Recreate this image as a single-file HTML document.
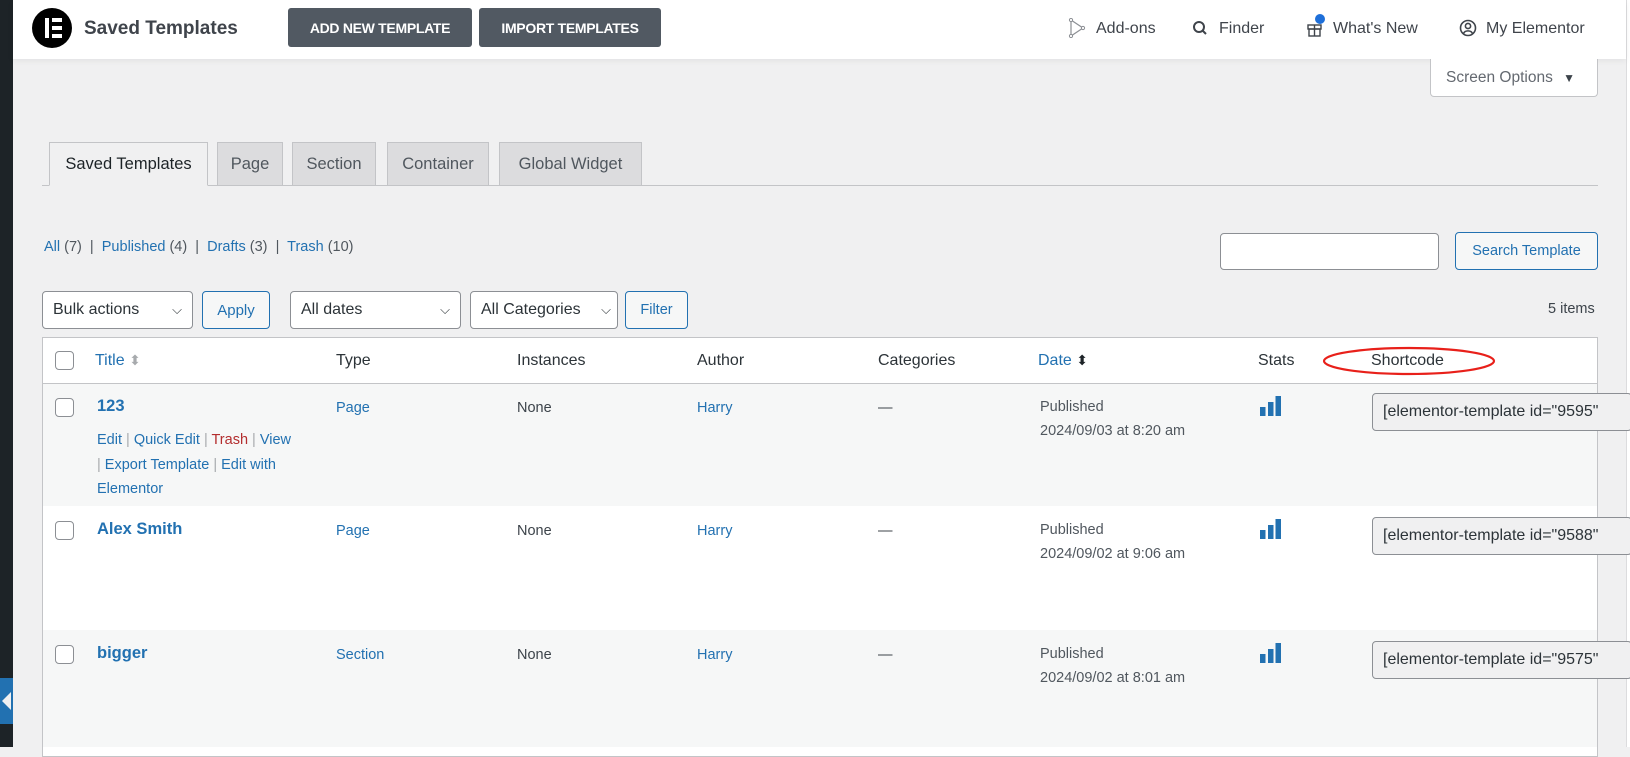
<!DOCTYPE html>
<html><head><meta charset="utf-8"><style>
*{box-sizing:border-box;margin:0;padding:0}
body{width:1630px;height:747px;overflow:hidden;background:#f0f0f1;font-family:"Liberation Sans",sans-serif;font-size:14.5px;color:#3c434a;position:relative}
.a{position:absolute;white-space:nowrap}
a{color:#2271b1;text-decoration:none}
.hdr{position:absolute;left:13px;top:0;width:1613px;height:59px;background:#fff;box-shadow:0 2px 6px rgba(0,0,0,.06)}
.btn{position:absolute;top:8px;height:39px;background:#515962;color:#fff;border-radius:3px;font-weight:bold;font-size:14px;display:flex;align-items:center;justify-content:center;letter-spacing:-.3px}
.nav{position:absolute;top:19px;font-size:16px;color:#3f444b}
.tab{position:absolute;top:142px;height:44px;border:1px solid #c3c4c7;background:#dcdcde;display:flex;align-items:center;justify-content:center;font-size:16.5px;color:#50575e}
.sel{position:absolute;height:38px;border:1px solid #8c8f94;border-radius:4px;background:#fff;font-size:16px;padding:0 10px;display:flex;align-items:center;justify-content:space-between;color:#2c3338}
.sb{position:absolute;height:38px;border:1px solid #2271b1;border-radius:4px;background:#f6f7f7;color:#2271b1;font-size:14.5px;display:flex;align-items:center;justify-content:center}
.cb{position:absolute;width:19px;height:19px;border:1px solid #8c8f94;border-radius:4px;background:#fff}
.th{position:absolute;top:352px;font-size:16px;color:#2c3338}
.sc{position:absolute;left:1372px;width:260px;height:38px;border:1px solid #8c8f94;border-radius:4px;background:#f0f0f1;font-size:16px;padding:0 10px;display:flex;align-items:center;color:#2c3338;white-space:nowrap;overflow:hidden}
.bars{position:absolute;width:21px;height:20px}
</style></head><body>
<div class="a" style="left:0;top:0;width:13px;height:747px;background:#1d2327"></div>
<div class="a" style="left:0;top:678px;width:13px;height:46px;background:#2271b1"></div>
<div class="a" style="left:2px;top:692px;width:0;height:0;border-top:9px solid transparent;border-bottom:9px solid transparent;border-right:9px solid #f0f0f1"></div>
<div class="a" style="left:1626px;top:0;width:4px;height:747px;background:#fff;border-left:1px solid #dcdcde"></div>

<div class="hdr"></div>
<div class="a" style="left:32px;top:8px;width:40px;height:40px;border-radius:50%;background:#000"></div>
<div class="a" style="left:45px;top:18px;width:4px;height:20px;background:#fff"></div>
<div class="a" style="left:52px;top:18px;width:10px;height:4px;background:#fff"></div>
<div class="a" style="left:52px;top:26px;width:10px;height:4px;background:#fff"></div>
<div class="a" style="left:52px;top:34px;width:10px;height:4px;background:#fff"></div>
<div class="a" style="left:84px;top:18px;font-size:19px;font-weight:bold;color:#3f444b">Saved Templates</div>
<div class="btn" style="left:288px;width:184px">ADD NEW TEMPLATE</div>
<div class="btn" style="left:479px;width:182px">IMPORT TEMPLATES</div>

<svg class="a" style="left:1068px;top:18px" width="18" height="20" viewBox="0 0 18 20"><path d="M3 2 L15 10 L3 18 Z" fill="none" stroke="#8c8f94" stroke-width="1.2"/><circle cx="3" cy="2" r="1.6" fill="#fff" stroke="#8c8f94"/><circle cx="15" cy="10" r="1.6" fill="#fff" stroke="#8c8f94"/><circle cx="3" cy="18" r="1.6" fill="#fff" stroke="#8c8f94"/></svg>
<div class="nav" style="left:1096px;top:20px">Add-ons</div>
<svg class="a" style="left:1192px;top:20px" width="16" height="16" viewBox="0 0 16 16"><circle cx="7" cy="7" r="5" fill="none" stroke="#3f444b" stroke-width="2"/><path d="M10.5 10.5 L14 14" stroke="#3f444b" stroke-width="2"/></svg>
<div class="nav" style="left:1219px;top:20px">Finder</div>
<svg class="a" style="left:1306px;top:19px" width="17" height="18" viewBox="0 0 17 18"><rect x="2" y="6" width="13" height="4" fill="none" stroke="#3f444b" stroke-width="1.4"/><rect x="3" y="10" width="11" height="7" fill="none" stroke="#3f444b" stroke-width="1.4"/><path d="M8.5 6 V17" stroke="#3f444b" stroke-width="1.4"/></svg>
<div class="a" style="left:1315px;top:14px;width:10px;height:10px;border-radius:50%;background:#1e6fd9"></div>
<div class="nav" style="left:1333px;top:20px">What's New</div>
<svg class="a" style="left:1459px;top:19px" width="18" height="18" viewBox="0 0 18 18"><circle cx="9" cy="9" r="7.5" fill="none" stroke="#3f444b" stroke-width="1.6"/><circle cx="9" cy="7" r="2.6" fill="none" stroke="#3f444b" stroke-width="1.6"/><path d="M4.5 14.5 C6 11 12 11 13.5 14.5" fill="none" stroke="#3f444b" stroke-width="1.6"/></svg>
<div class="nav" style="left:1486px;top:20px">My Elementor</div>

<div class="a" style="left:1430px;top:59px;width:168px;height:38px;background:#fff;border:1px solid #c3c4c7;border-top:none;border-radius:0 0 4px 4px;font-size:15.5px;color:#646970;padding:10px 0 0 15px">Screen Options <span style="color:#3c434a;font-size:12px;margin-left:6px">▼</span></div>

<div class="a" style="left:42px;top:185px;width:1556px;height:1px;background:#c3c4c7"></div>
<div class="tab" style="left:49px;width:159px;background:#f0f0f1;border-bottom-color:#f0f0f1;color:#1d2327">Saved Templates</div>
<div class="tab" style="left:217px;width:66px">Page</div>
<div class="tab" style="left:292px;width:84px">Section</div>
<div class="tab" style="left:387px;width:102px">Container</div>
<div class="tab" style="left:499px;width:143px">Global Widget</div>

<div class="a" style="left:44px;top:239px;color:#50575e"><a>All</a> (7) &nbsp;|&nbsp; <a>Published</a> (4) &nbsp;|&nbsp; <a>Drafts</a> (3) &nbsp;|&nbsp; <a>Trash</a> (10)</div>
<div class="a" style="left:1220px;top:233px;width:219px;height:37px;background:#fff;border:1px solid #8c8f94;border-radius:4px"></div>
<div class="sb" style="left:1455px;top:232px;width:143px">Search Template</div>

<div class="sel" style="left:42px;top:291px;width:151px">Bulk actions <span style="font-size:13px">⌵</span></div>
<div class="sb" style="left:202px;top:291px;width:68px;font-size:15px">Apply</div>
<div class="sel" style="left:290px;top:291px;width:171px">All dates <span style="font-size:13px">⌵</span></div>
<div class="sel" style="left:470px;top:291px;width:148px;padding-right:6px">All Categories <span style="font-size:13px">⌵</span></div>
<div class="sb" style="left:625px;top:291px;width:63px">Filter</div>
<div class="a" style="left:1548px;top:301px;color:#3c434a">5 items</div>

<div class="a" style="left:42px;top:337px;width:1556px;height:420px;background:#fff;border:1px solid #c3c4c7"></div>
<div class="a" style="left:43px;top:383px;width:1554px;height:1px;background:#c3c4c7"></div>
<div class="a" style="left:43px;top:384px;width:1554px;height:122px;background:#f6f7f7"></div>
<div class="a" style="left:43px;top:630px;width:1554px;height:117px;background:#f6f7f7"></div>

<div class="cb" style="left:55px;top:351px"></div>
<div class="th" style="left:95px"><a>Title</a> <span style="color:#a7aaad;font-size:14px">⬍</span></div>
<div class="th" style="left:336px">Type</div>
<div class="th" style="left:517px">Instances</div>
<div class="th" style="left:697px">Author</div>
<div class="th" style="left:878px">Categories</div>
<div class="th" style="left:1038px"><a>Date</a> <span style="font-size:14px;color:#1d2327">⬍</span></div>
<div class="th" style="left:1258px">Stats</div>
<div class="th" style="left:1371px">Shortcode</div>
<svg class="a" style="left:1320px;top:345px" width="180" height="32"><ellipse cx="89" cy="16" rx="85" ry="13" fill="none" stroke="#e8201a" stroke-width="2.2"/></svg>

<!-- row1 -->
<div class="cb" style="left:55px;top:398px"></div>
<div class="a" style="left:97px;top:397px;font-size:16.5px;font-weight:bold"><a>123</a></div>
<div class="a" style="left:97px;top:428px;line-height:24.5px;white-space:normal;width:220px;color:#a7aaad"><a>Edit</a> | <a>Quick Edit</a> | <a style="color:#b32d2e">Trash</a> | <a>View</a><br>| <a>Export Template</a> | <a>Edit with</a><br><a>Elementor</a></div>
<div class="a" style="left:336px;top:400px"><a>Page</a></div>
<div class="a" style="left:517px;top:400px">None</div>
<div class="a" style="left:697px;top:400px"><a>Harry</a></div>
<div class="a" style="left:878px;top:400px">—</div>
<div class="a" style="left:1040px;top:395px;line-height:24px;color:#50575e">Published<br>2024/09/03 at 8:20 am</div>
<div class="sc" style="top:393px">[elementor-template id="9595"</div>

<!-- row2 -->
<div class="cb" style="left:55px;top:521px"></div>
<div class="a" style="left:97px;top:520px;font-size:16.5px;font-weight:bold"><a>Alex Smith</a></div>
<div class="a" style="left:336px;top:523px"><a>Page</a></div>
<div class="a" style="left:517px;top:523px">None</div>
<div class="a" style="left:697px;top:523px"><a>Harry</a></div>
<div class="a" style="left:878px;top:523px">—</div>
<div class="a" style="left:1040px;top:518px;line-height:24px;color:#50575e">Published<br>2024/09/02 at 9:06 am</div>
<div class="sc" style="top:517px">[elementor-template id="9588"</div>

<!-- row3 -->
<div class="cb" style="left:55px;top:645px"></div>
<div class="a" style="left:97px;top:644px;font-size:16.5px;font-weight:bold"><a>bigger</a></div>
<div class="a" style="left:336px;top:647px"><a>Section</a></div>
<div class="a" style="left:517px;top:647px">None</div>
<div class="a" style="left:697px;top:647px"><a>Harry</a></div>
<div class="a" style="left:878px;top:647px">—</div>
<div class="a" style="left:1040px;top:642px;line-height:24px;color:#50575e">Published<br>2024/09/02 at 8:01 am</div>
<div class="sc" style="top:641px">[elementor-template id="9575"</div>

<svg class="bars" style="left:1260px;top:396px" viewBox="0 0 21 20"><rect x="0" y="11" width="5.5" height="9" fill="#2271b1"/><rect x="8" y="6" width="5.5" height="14" fill="#2271b1"/><rect x="15.5" y="0" width="5.5" height="20" fill="#2271b1"/></svg>
<svg class="bars" style="left:1260px;top:519px" viewBox="0 0 21 20"><rect x="0" y="11" width="5.5" height="9" fill="#2271b1"/><rect x="8" y="6" width="5.5" height="14" fill="#2271b1"/><rect x="15.5" y="0" width="5.5" height="20" fill="#2271b1"/></svg>
<svg class="bars" style="left:1260px;top:643px" viewBox="0 0 21 20"><rect x="0" y="11" width="5.5" height="9" fill="#2271b1"/><rect x="8" y="6" width="5.5" height="14" fill="#2271b1"/><rect x="15.5" y="0" width="5.5" height="20" fill="#2271b1"/></svg>
</body></html>
